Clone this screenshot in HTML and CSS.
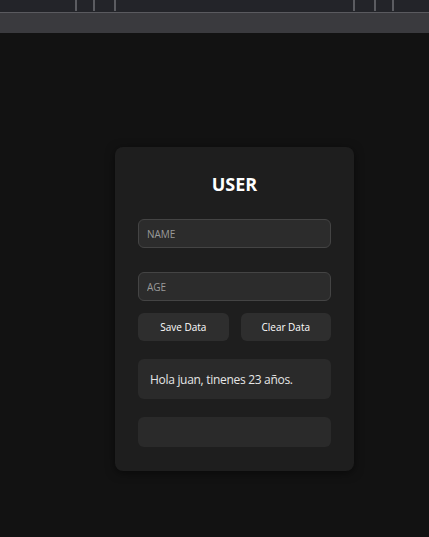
FILE: index.html
```html
<!DOCTYPE html>
<html lang="es">
<head>
<meta charset="utf-8">
<title>User</title>
<link rel="stylesheet" href="styles.css">
</head>
<body>
<div class="topstrip">
  <div class="ticks ticks-left"><span></span><span></span><span></span></div>
  <div class="ticks ticks-right"><span></span><span></span><span></span></div>
</div>
<div class="toolbar"></div>
<main class="stage">
  <section class="card">
    <h1 class="title">USER</h1>
    <input class="field" type="text" placeholder="NAME">
    <input class="field field-age" type="text" placeholder="AGE">
    <div class="actions">
      <button class="btn">Save Data</button>
      <button class="btn">Clear Data</button>
    </div>
    <div class="result">Hola juan, tinenes 23 años.</div>
    <div class="result result-empty"></div>
  </section>
</main>
</body>
</html>
```

FILE: styles.css
```css
* { box-sizing: border-box; }
html, body { margin: 0; padding: 0; }
body {
  background: #121212;
  font-family: "Open Sans", "Noto Sans", sans-serif;
  color: #fff;
  height: 537px;
  overflow: hidden;
}
.topstrip {
  height: 12px;
  background: #232429;
  display: flex;
  justify-content: space-between;
  padding: 0 35px 0 75px;
}
.ticks { display: flex; height: 11px; }
.ticks span { width: 2px; height: 11px; background: #5b5c61; }
.ticks-left span:nth-child(2) { margin-left: 16px; }
.ticks-left span:nth-child(3) { margin-left: 19px; }
.ticks-right span:nth-child(2) { margin-left: 19px; }
.ticks-right span:nth-child(3) { margin-left: 16px; }
.toolbar {
  height: 21px;
  background: #3a3a3e;
  border-top: 1px solid #5a5a5f;
}
.stage {
  display: flex;
  justify-content: flex-start;
  padding: 114px 0 0 115px;
}
.card {
  width: 239px;
  height: 324px;
  background: #1e1e1e;
  border-radius: 8px;
  box-shadow: 0 2px 10px rgba(0,0,0,0.5);
  padding: 25px 23px 24px 23px;
  display: flex;
  flex-direction: column;
}
.title {
  margin: 0 0 23px 0;
  height: 24px;
  text-align: center;
  font-size: 18px;
  font-weight: 700;
  line-height: 24px;
  color: #fff;
}
.field {
  height: 29px;
  width: 100%;
  background: #2c2c2c;
  border: 1px solid #444;
  border-radius: 6px;
  padding: 0 8px;
  font-family: inherit;
  font-size: 10px;
  color: #ccc;
  outline: none;
}
.field::placeholder { color: #9a9a9a; }
.field-age { margin-top: 24px; }
.actions {
  margin-top: 12px;
  display: flex;
  gap: 12px;
}
.btn {
  flex: 1;
  height: 28px;
  background: #2e2e2e;
  border: none;
  border-radius: 6px;
  color: #fff;
  font-family: inherit;
  font-size: 10px;
  font-weight: 500;
}
.result {
  margin-top: 18px;
  height: 40px;
  background: #2a2a2a;
  border-radius: 6px;
  padding: 0 12px;
  display: flex;
  align-items: center;
  font-size: 12px;
  letter-spacing: -0.3px;
  color: #e6e6e6;
}
.result-empty { height: 30px; }
```
